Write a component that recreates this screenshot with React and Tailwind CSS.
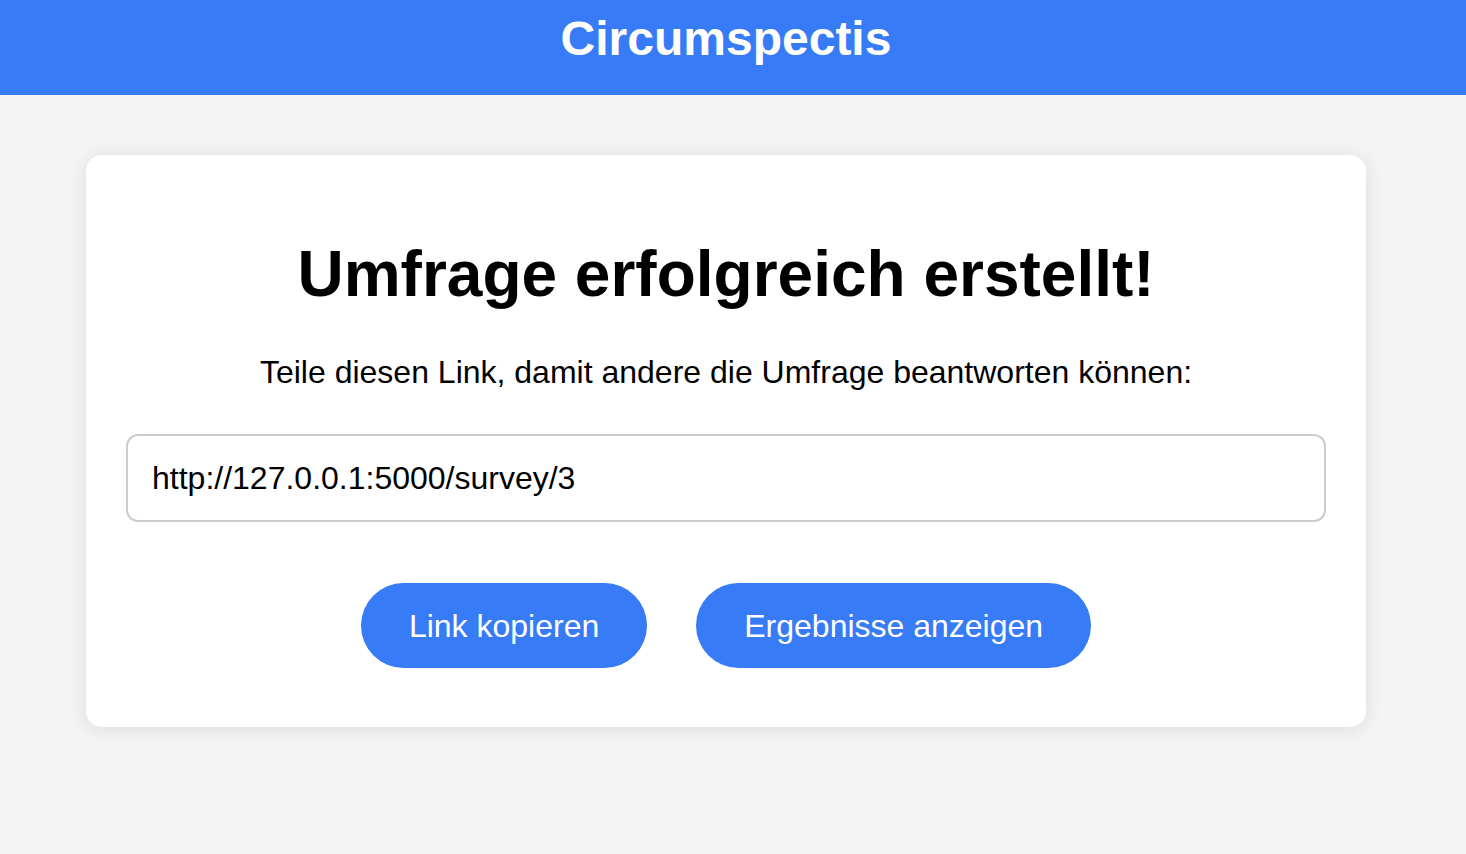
import React from "react";

const App = () => {
  const url = "http://127.0.0.1:5000/survey/3";

  return (
    <div className="min-h-screen bg-[#f4f4f4] font-['Liberation_Sans',Arial,sans-serif] text-black">
      <header className="h-[95px] bg-[#377bf6] pt-[11px] pr-[14px] text-center">
        <h1 className="text-[48px] leading-[55px] font-bold text-white">Circumspectis</h1>
      </header>

      <main className="pr-[14px]">
        <div className="mx-auto mt-[60px] w-[1280px] rounded-[16px] bg-white p-[40px] text-center shadow-[0_2px_20px_rgba(0,0,0,0.1)]">
          <h2 className="mt-[42px] mb-[43px] text-[64px] leading-[74px] font-bold">
            Umfrage erfolgreich erstellt!
          </h2>
          <p className="mb-[43px] text-[32px] leading-[37px]">
            Teile diesen Link, damit andere die Umfrage beantworten können:
          </p>
          <input
            type="text"
            readOnly
            value={url}
            className="block h-[88px] w-full rounded-[12px] border-2 border-[#cccccc] px-[24px] text-[32px] text-black outline-none"
          />
          <div className="mt-[61px] mb-[19px] flex justify-center gap-[49px]">
            <button className="h-[85px] rounded-full bg-[#377bf6] px-[48px] text-[32px] text-white">
              Link kopieren
            </button>
            <button className="h-[85px] rounded-full bg-[#377bf6] px-[48px] text-[32px] text-white">
              Ergebnisse anzeigen
            </button>
          </div>
        </div>
      </main>
    </div>
  );
};

export default App;
